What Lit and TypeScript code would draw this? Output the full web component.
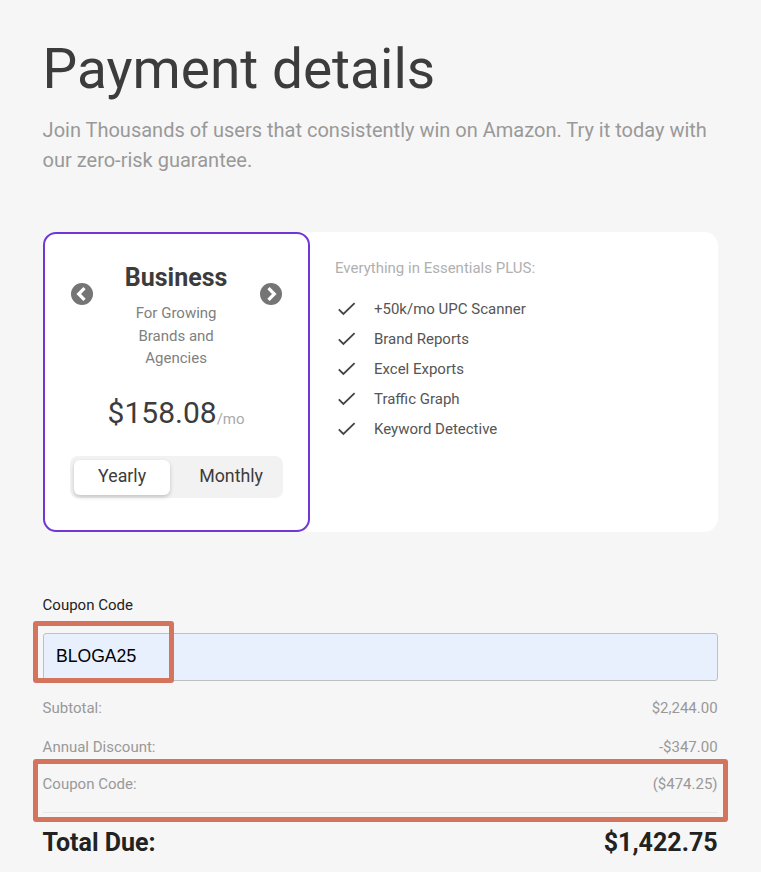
import { LitElement, html, css, svg } from "lit";
import { customElement } from "lit/decorators.js";

@customElement("app-root")
class AppRoot extends LitElement {
  static styles = css`
    :host { display: block; box-sizing: border-box; height: 872px; overflow: hidden; background: #f6f6f6; padding: 32px 43px 0 42.6px; font-family: Roboto, sans-serif; color: #3c3c3c; }
    * { box-sizing: border-box; }
    h1, h2, p { margin: 0; font-weight: 400; }
    h1 { font-size: 55px; line-height: 75px; height: 76px; white-space: nowrap; }
    .lead { margin-top: 7px; font-size: 20px; line-height: 30px; color: #999; height: 60px; white-space: nowrap; }
    .card { margin-top: 57px; height: 300px; width: 675px; background: #fff; border-radius: 14px; display: flex; }
    .plan { width: 267px; height: 300px; border: 2px solid #7037d8; border-radius: 13px; padding: 29px 25px 0; }
    .head { display: flex; justify-content: space-between; height: 108px; }
    .head svg { margin-top: 19.4px; width: 24px; height: 24px; }
    .mid { text-align: center; }
    h2 { font-size: 25px; line-height: 30px; font-weight: 700; }
    .for { margin-top: 9px; font-size: 15px; line-height: 22.5px; color: #808080; }
    .price { margin-top: 21px; height: 42px; text-align: center; font-size: 30px; line-height: 42px; }
    .mo { font-size: 15px; color: #aaa; position: relative; top: 1px; }
    .toggle { margin-top: 22px; height: 42px; border-radius: 8px; background: #f2f2f2; display: flex; padding: 4px; font-size: 17.8px; line-height: 32px; text-align: center; }
    .on { width: 96px; height: 35px; padding-left: 1px; background: #fff; border-radius: 6px; box-shadow: 0 2px 4px #0003; }
    .off { flex: 1; padding-left: 14px; }
    .feat { padding: 25px 0 0 25.4px; font-size: 15px; }
    .cap { line-height: 22px; color: #b0b0b0; margin-bottom: 15px; }
    .row { display: flex; height: 30px; align-items: center; color: #555; }
    .row svg { width: 24px; height: 24px; margin-right: 15px; }
    .label { margin-top: 63px; font-size: 15px; line-height: 20px; color: #222; }
    .field { position: relative; margin-top: 18px; width: 675px; height: 48px; border: 1px solid #bfc0c4; border-radius: 3px; background: #e8f0fe; padding-left: 12.4px; font: 17.6px/45px "Liberation Sans", sans-serif; color: #000; }
    .mark { position: absolute; border: 5px solid #d5745c; border-radius: 3px; }
    .m1 { left: -11px; top: -13px; width: 141px; height: 62px; }
    .m2 { left: -10px; top: -16px; width: 695px; height: 63px; }
    .line { display: flex; justify-content: space-between; width: 675px; font-size: 15px; line-height: 20px; color: #999; }
    .sub { margin-top: 17px; }
    .ann { margin-top: 19px; }
    .coupon { margin-top: 18px; position: relative; height: 38px; border-bottom: 1px solid #e8e8e8; line-height: 19px; }
    .total { margin-top: 13px; font-size: 25px; line-height: 33px; font-weight: 700; color: #222; }
  `;
  render() {
    const arrow = (d: string) => svg`<svg viewBox="0 0 24 24"><circle cx="12" cy="12" r="11" fill="#757575"/><path d=${d} fill="none" stroke="#fff" stroke-width="3.2"/></svg>`;
    const features = ["+50k/mo UPC Scanner", "Brand Reports", "Excel Exports", "Traffic Graph", "Keyword Detective"];
    return html`
      <h1>Payment details</h1>
      <p class="lead">Join Thousands of users that consistently win on Amazon. Try it today with<br>our zero-risk guarantee.</p>
      <section class="card">
        <div class="plan">
          <div class="head">${arrow("M14.5 6.2 8.7 12l5.8 5.8")}
            <div class="mid"><h2>Business</h2><p class="for">For Growing<br>Brands and<br>Agencies</p></div>
            ${arrow("M9.5 6.2 15.3 12l-5.8 5.8")}</div>
          <div class="price">$158.08<span class="mo">/mo</span></div>
          <div class="toggle"><div class="on">Yearly</div><div class="off">Monthly</div></div>
        </div>
        <div class="feat"><p class="cap">Everything in Essentials PLUS:</p>
          ${features.map(t => html`<div class="row"><svg viewBox="0 0 24 24"><path d="m3.8 12.4 4.6 4.6L19.6 6.1" fill="none" stroke="#444" stroke-width="1.8"/></svg>${t}</div>`)}
        </div>
      </section>
      <div class="label">Coupon Code</div>
      <div class="field">BLOGA25<i class="mark m1"></i></div>
      <div class="line sub"><span>Subtotal:</span><span>$2,244.00</span></div>
      <div class="line ann"><span>Annual Discount:</span><span>-$347.00</span></div>
      <div class="line coupon"><span>Coupon Code:</span><span>($474.25)</span><i class="mark m2"></i></div>
      <div class="line total"><span>Total Due:</span><span>$1,422.75</span></div>
    `;
  }
}
